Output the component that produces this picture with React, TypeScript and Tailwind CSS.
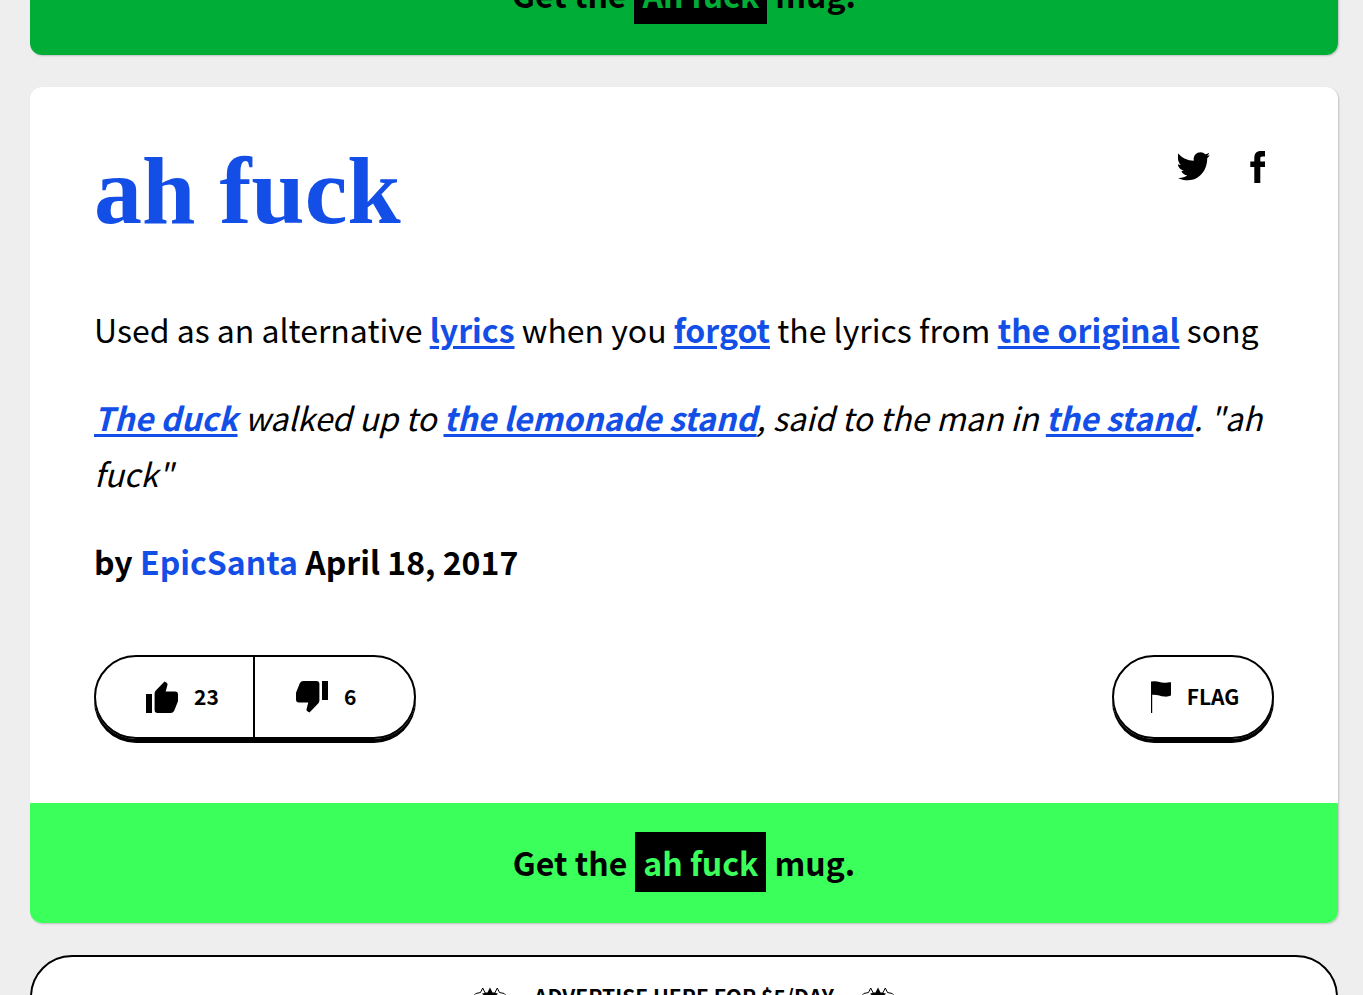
const term =
  "font-bold text-[#134fe7] underline decoration-3 underline-offset-3";

type MugBarProps = { word: string; bar: string; text: string };

function MugBar({ word, bar, text }: MugBarProps) {
  return (
    <a
      href="#mug"
      className={`flex h-[120px] items-center justify-center gap-2 pb-[2px] text-[32px] leading-[60px] font-bold text-black ${bar}`}
    >
      <span>Get the</span>
      <span className={`bg-black px-2 ${text}`}>{word}</span>
      <span>mug.</span>
    </a>
  );
}

function Twitter() {
  return (
    <svg viewBox="0 0 32 32" className="size-8" fill="currentColor" aria-hidden="true">
      <path d="M.2 2.500C4 7 9.500 9.600 15.800 9.800 15 5 18 1.200 22.500 1.200c2 0 3.600.8 4.700 2 1.500-.3 2.800-.8 4-1.500-.4 1.400-1.200 2.300-2.200 3 1-.1 2-.3 2.800-.7-.6 1.200-1.500 2.200-2.600 3.200C29.500 18.500 22 29.300 10 29.300c-3.700 0-7.200-.8-10-2.400 3.500.3 6.800-.6 9.300-2.600-2.800-.2-5-1.900-5.900-4.300.9.100 1.800.1 2.600-.1C2.800 19-.1 16.500 0 13.300c.9.400 1.900.7 2.900.7C.2 12-.8 6.800.2 2.500z" />
    </svg>
  );
}

function Facebook() {
  return (
    <svg viewBox="0 0 16 32" className="h-8 w-4" fill="currentColor" aria-hidden="true">
      <path d="M4.300 32V16H.3v-5.500h4V7.200C4.300 2.300 6.500 0 11 0h4v5.500h-2.500c-1.900 0-2.200.8-2.200 2.300v2.700H15V16h-4.700v16z" />
    </svg>
  );
}

function Thumb({ className = "" }: { className?: string }) {
  return (
    <svg viewBox="0 0 32 32" className={`size-8 ${className}`} fill="currentColor" aria-hidden="true">
      <path d="M0 13h6v19H0zM18.500.4 9.600 9.800A4 4 0 0 0 8.600 12.500V29a3 3 0 0 0 3 3h13a4 4 0 0 0 3.600-2.300l3.400-8.500a4 4 0 0 0 .4-1.800v-6a3 3 0 0 0-3-3h-9.300l1.800-6.600a2.400 2.400 0 0 0-.8-2.100z" />
    </svg>
  );
}

function Flag() {
  return (
    <svg viewBox="0 0 20 32" className="h-8 w-5" fill="currentColor" aria-hidden="true">
      <path d="M0 .5h1.200C6-.6 9 1.800 13 1.800c3 0 4.500-.5 7-.5V14.500c-2 .9-4 1.300-6.500 1.100C9 15.200 6 13.200 1.200 13.800V32H0z" />
    </svg>
  );
}

function Sparkle() {
  return (
    <svg viewBox="0 0 32 32" className="size-8" fill="none" stroke="currentColor" aria-hidden="true">
      <path
        d="M16 6.500l2.500 5 5.500 1-4 4 1 6-5-3-5 3 1-6-4-4 5.500-1z"
        fill="currentColor"
        stroke="none"
      />
      <path d="M.8 13.500l1-1 4.700-1 2.200-4.500 2.500 5 4.800 .8 4.800-.8 2.500-5 2.200 4.500 4.700 1 1 1-3 4 1.500 5-5 1-2.500 4-6.200-2.500L9.800 27.500l-2.500-4-5-1 1.500-5z" />
    </svg>
  );
}

export default function App() {
  return (
    <div className="h-screen overflow-hidden bg-[#eeeeee] font-['Noto_Sans_CJK_SC',sans-serif] text-black">
      <main className="-mt-[65px] flex flex-col gap-8 pr-[25px] pl-[30px]">
        <section className="overflow-hidden rounded-xl shadow-[1px_1px_2px_rgba(0,0,0,0.2)]">
          <MugBar word="Ah fuck" bar="bg-[#00ad37]" text="text-[#00ad37]" />
        </section>

        <article className="overflow-hidden rounded-xl bg-white shadow-[1px_1px_2px_rgba(0,0,0,0.2)]">
          <div className="p-16">
            <header className="mb-[70px] flex items-start justify-between">
              <h1 className="font-['Liberation_Serif',serif] text-[96px] leading-[80px] font-bold text-[#134fe7]">
                <a href="#word">ah fuck</a>
              </h1>
              <div className="flex items-center gap-10 pr-2">
                <a href="#twitter" aria-label="Share on Twitter">
                  <Twitter />
                </a>
                <a href="#facebook" aria-label="Share on Facebook">
                  <Facebook />
                </a>
              </div>
            </header>

            <div className="flex flex-col gap-8 text-[32px] leading-[56px]">
              <p>
                Used as an alternative <a href="#lyrics" className={term}>lyrics</a> when you{" "}
                <a href="#forgot" className={term}>forgot</a> the lyrics from{" "}
                <a href="#original" className={term}>the original</a> song
              </p>
              <p className="italic">
                <a href="#duck" className={term}>The duck</a> walked up to{" "}
                <a href="#lemonade" className={term}>the lemonade stand</a>, said to the man in{" "}
                <a href="#stand" className={term}>the stand</a>. "ah fuck"
              </p>
              <p className="font-bold">
                by <a href="#author" className="text-[#134fe7]">EpicSanta</a> April 18, 2017
              </p>
            </div>

            <div className="mt-[66px] flex items-center justify-between text-[21px] font-bold">
              <div className="flex rounded-full border-2 border-black shadow-[0_4px_0_#000]">
                <button
                  type="button"
                  aria-label="Thumbs up"
                  className="flex h-20 w-[159px] items-center gap-4 border-r-2 border-black pl-[50px]"
                >
                  <Thumb />
                  23
                </button>
                <button
                  type="button"
                  aria-label="Thumbs down"
                  className="flex h-20 w-[159px] items-center gap-4 pl-[41px]"
                >
                  <Thumb className="rotate-180" />
                  6
                </button>
              </div>
              <button
                type="button"
                className="flex h-[84px] w-[162px] items-center justify-center gap-4 rounded-full border-2 border-black pl-1 shadow-[0_4px_0_#000]"
              >
                <Flag />
                FLAG
              </button>
            </div>
          </div>
          <MugBar word="ah fuck" bar="bg-[#3bff5a]" text="text-[#3bff5a]" />
        </article>

        <a
          href="#advertise"
          className="flex h-[84px] items-center justify-center gap-7 rounded-full border-2 border-black bg-white text-[21px] font-bold"
        >
          <Sparkle />
          ADVERTISE HERE FOR $5/DAY
          <Sparkle />
        </a>
      </main>
    </div>
  );
}
